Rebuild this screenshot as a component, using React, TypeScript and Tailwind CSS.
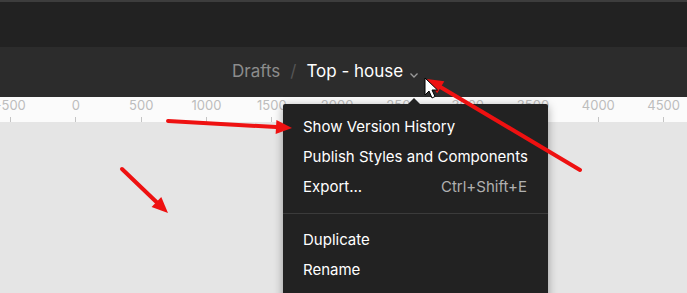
import React from "react";

const rulerMarks = ["-500", "0", "500", "1000", "1500", "2000", "2500", "3000", "3500", "4000", "4500"];

type MenuItem = { label: string; shortcut?: string };

const menuTop: MenuItem[] = [
  { label: "Show Version History" },
  { label: "Publish Styles and Components" },
  { label: "Export...", shortcut: "Ctrl+Shift+E" },
];

const menuBottom: MenuItem[] = [{ label: "Duplicate" }, { label: "Rename" }];

function Row({ item }: { item: MenuItem }) {
  return (
    <div className="flex h-[30px] items-center justify-between whitespace-nowrap pl-[20px] pr-[21px]">
      <span className="text-white">{item.label}</span>
      {item.shortcut && <span className="text-[#b0b0b0]">{item.shortcut}</span>}
    </div>
  );
}

function Arrow({ x1, y1, x2, y2 }: { x1: number; y1: number; x2: number; y2: number }) {
  const a = Math.atan2(y2 - y1, x2 - x1);
  const len = 16;
  const w = 7;
  const bx = x2 - Math.cos(a) * len;
  const by = y2 - Math.sin(a) * len;
  const px = -Math.sin(a) * w;
  const py = Math.cos(a) * w;
  return (
    <g>
      <line x1={x1} y1={y1} x2={bx} y2={by} stroke="#ee1111" strokeWidth={4} strokeLinecap="round" />
      <polygon points={`${x2},${y2} ${bx + px},${by + py} ${bx - px},${by - py}`} fill="#ee1111" />
    </g>
  );
}

export default function App() {
  return (
    <div
      className="relative h-[293px] w-[687px] overflow-hidden bg-[#e5e5e5]"
      style={{ fontFamily: "Inter, 'Noto Sans', sans-serif" }}
    >
      {/* top bar */}
      <div className="h-[2px] bg-[#3d3d3d]" />
      <div className="h-[45px] bg-[#222222]" />

      {/* toolbar with breadcrumb */}
      <div className="flex h-[50px] items-center bg-[#2c2c2c] pl-[232px] text-[17px]">
        <span className="text-[#8c8c8c]">Drafts</span>
        <span className="mx-[10px] text-[#555555]">/</span>
        <span className="text-white">Top - house</span>
        <svg className="ml-[6px] mt-[6px]" width="10" height="7" viewBox="0 0 10 7">
          <path d="M1.5 1.5 L5 5 L8.5 1.5" fill="none" stroke="#9a9a9a" strokeWidth="1.3" />
        </svg>
      </div>

      {/* ruler */}
      <div className="flex h-[25px] bg-[#fbfbfb] -ml-[22px]">
        {rulerMarks.map((m) => (
          <div key={m} className="flex w-[65.3px] shrink-0 flex-col items-center">
            <span className="text-[13px] leading-[16px] text-[#bdbdbd]">{m}</span>
            <div className="mt-[4px] h-[5px] w-px bg-[#c4c4c4]" />
          </div>
        ))}
      </div>

      {/* dropdown menu */}
      <div className="absolute left-[283px] top-[104px] w-[265px] rounded-[2px] bg-[#222222] pt-[8px] pb-[20px] text-[15px] shadow-[0_2px_10px_rgba(0,0,0,0.35)]">
        <div className="absolute -top-[6px] left-[125px] h-0 w-0 border-x-[6px] border-b-[6px] border-x-transparent border-b-[#222222]" />
        {menuTop.map((i) => (
          <Row key={i.label} item={i} />
        ))}
        <div className="my-[11px] h-px bg-[#3b3b3b]" />
        {menuBottom.map((i) => (
          <Row key={i.label} item={i} />
        ))}
      </div>

      {/* annotations */}
      <svg className="pointer-events-none absolute left-0 top-0" width="687" height="293">
        <Arrow x1={168} y1={121} x2={292} y2={128} />
        <Arrow x1={122} y1={169} x2={168} y2={213} />
        <Arrow x1={580} y1={170} x2={427} y2={79} />
        <path
          d="M425 78 L425 95 L429 91 L432 98 L435 96.5 L432 90 L437.5 90 Z"
          fill="#ffffff"
          stroke="#000000"
          strokeWidth="1"
          strokeLinejoin="round"
        />
      </svg>
    </div>
  );
}
